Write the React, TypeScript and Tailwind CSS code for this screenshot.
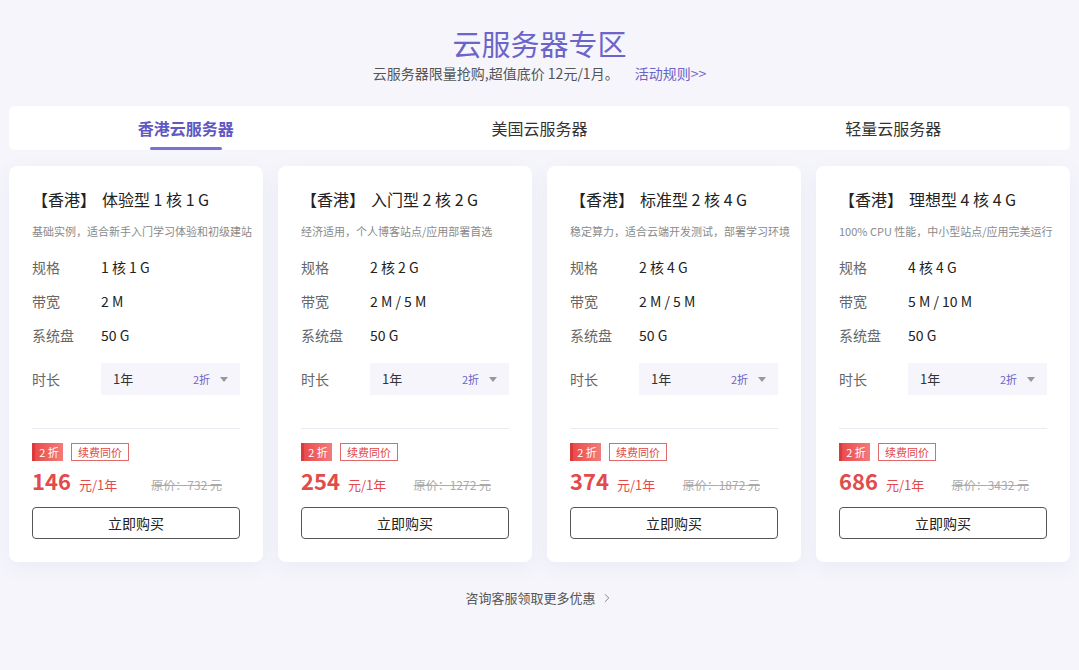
import { ChevronRight } from 'lucide-react';

const font = { fontFamily: '"Noto Sans CJK SC", "Noto Sans", sans-serif' };

interface Plan {
  name: string;
  desc: string;
  spec: string;
  bandwidth: string;
  disk: string;
  price: string;
  original: string;
}

const plans: Plan[] = [
  {
    name: '体验型 1 核 1 G',
    desc: '基础实例，适合新手入门学习体验和初级建站',
    spec: '1 核 1 G',
    bandwidth: '2 M',
    disk: '50 G',
    price: '146',
    original: '732',
  },
  {
    name: '入门型 2 核 2 G',
    desc: '经济适用，个人博客站点/应用部署首选',
    spec: '2 核 2 G',
    bandwidth: '2 M / 5 M',
    disk: '50 G',
    price: '254',
    original: '1272',
  },
  {
    name: '标准型 2 核 4 G',
    desc: '稳定算力，适合云端开发测试，部署学习环境',
    spec: '2 核 4 G',
    bandwidth: '2 M / 5 M',
    disk: '50 G',
    price: '374',
    original: '1872',
  },
  {
    name: '理想型 4 核 4 G',
    desc: '100% CPU 性能，中小型站点/应用完美运行',
    spec: '4 核 4 G',
    bandwidth: '5 M / 10 M',
    disk: '50 G',
    price: '686',
    original: '3432',
  },
];

const tabs = ['香港云服务器', '美国云服务器', '轻量云服务器'];

function Row({ label, value }: { label: string; value: string }) {
  return (
    <div className="flex h-5 items-center text-[14px] leading-5">
      <span className="w-[69px] text-[#666]">{label}</span>
      <span className="text-[#222]">{value}</span>
    </div>
  );
}

function PlanCard({ plan }: { plan: Plan }) {
  return (
    <div className="flex w-[254px] flex-col rounded-[8px] bg-white px-[23px] pt-[21px] pb-[23px] shadow-[0_6px_20px_rgba(110,110,190,0.07)]">
      <div className="text-[16px] leading-6 text-[#222]">
        <span>【香港】</span>
        <span className="ml-[6px]">{plan.name}</span>
      </div>
      <p className="mt-3 text-[11px] leading-4 whitespace-nowrap text-[#8a8a8a]">{plan.desc}</p>
      <div className="mt-[18px] flex flex-col gap-[14px]">
        <Row label="规格" value={plan.spec} />
        <Row label="带宽" value={plan.bandwidth} />
        <Row label="系统盘" value={plan.disk} />
      </div>
      <div className="mt-[18px] flex items-center text-[14px]">
        <span className="w-[69px] text-[#666]">时长</span>
        <div className="flex h-8 w-[139px] items-center bg-[#f5f5fb] pr-3 pl-3">
          <span className="text-[13px] text-[#333]">1年</span>
          <span className="ml-auto text-[11px] text-[#6c64c8]">2折</span>
          <span className="ml-[10px] h-0 w-0 border-x-[4px] border-t-[5px] border-x-transparent border-t-[#999]" />
        </div>
      </div>
      <div className="mt-[33px] h-px bg-[#eaeaf0]" />
      <div className="mt-[14px] flex h-[18px] items-center gap-2">
        <span className="flex h-[18px] w-[31px] items-center justify-center border-l-[3px] border-[#d93a3a] bg-gradient-to-r from-[#ea4b4b] to-[#f27a7a] text-[11px] text-white">
          2 折
        </span>
        <span className="flex h-[18px] w-[58px] items-center justify-center border border-[#e06a6a] text-[11px] text-[#e04848]">
          续费同价
        </span>
      </div>
      <div className="mt-[5px] flex h-7 items-baseline">
        <span className="text-[22px] leading-7 font-bold text-[#e24b4b]">{plan.price}</span>
        <span className="ml-2 text-[13px] text-[#e24b4b]">元/1年</span>
        <span className="ml-auto mr-[18px] text-[12px] text-[#aaa] line-through">
          原价：{plan.original} 元
        </span>
      </div>
      <button
        type="button"
        className="mt-[13px] h-8 w-full rounded-[4px] border border-[#555] bg-white text-[14px] text-[#222]"
      >
        立即购买
      </button>
    </div>
  );
}

export default function App() {
  return (
    <div className="min-h-[670px] bg-[#f5f5fb] px-[9px] pt-6" style={font}>
      <h1 className="text-center text-[29px] leading-[38px] text-[#6c64c8]">云服务器专区</h1>
      <p className="mt-px text-center text-[14px] leading-5 text-[#555]">
        云服务器限量抢购,超值底价 12元/1月。
        <span className="ml-4 text-[#6c64c8]">活动规则&gt;&gt;</span>
      </p>

      <div className="mt-[23px] grid h-[44px] grid-cols-3 rounded-[6px] bg-white">
        {tabs.map((tab, i) => (
          <div key={tab} className="relative flex items-center justify-center">
            <span
              className={
                i === 0
                  ? 'text-[16px] font-bold text-[#5f58c4]'
                  : 'text-[16px] text-[#333]'
              }
            >
              {tab}
            </span>
            {i === 0 && (
              <span className="absolute bottom-0 left-1/2 h-[3px] w-[72px] -translate-x-1/2 rounded-full bg-[#7a72d2]" />
            )}
          </div>
        ))}
      </div>

      <div className="mt-4 flex gap-[15px]">
        {plans.map((plan) => (
          <PlanCard key={plan.name} plan={plan} />
        ))}
      </div>

      <div className="mt-[26px] flex items-center justify-center gap-1 text-[13px] text-[#555]">
        <span>咨询客服领取更多优惠</span>
        <ChevronRight className="h-[14px] w-[14px] text-[#777]" strokeWidth={1.5} />
      </div>
    </div>
  );
}
